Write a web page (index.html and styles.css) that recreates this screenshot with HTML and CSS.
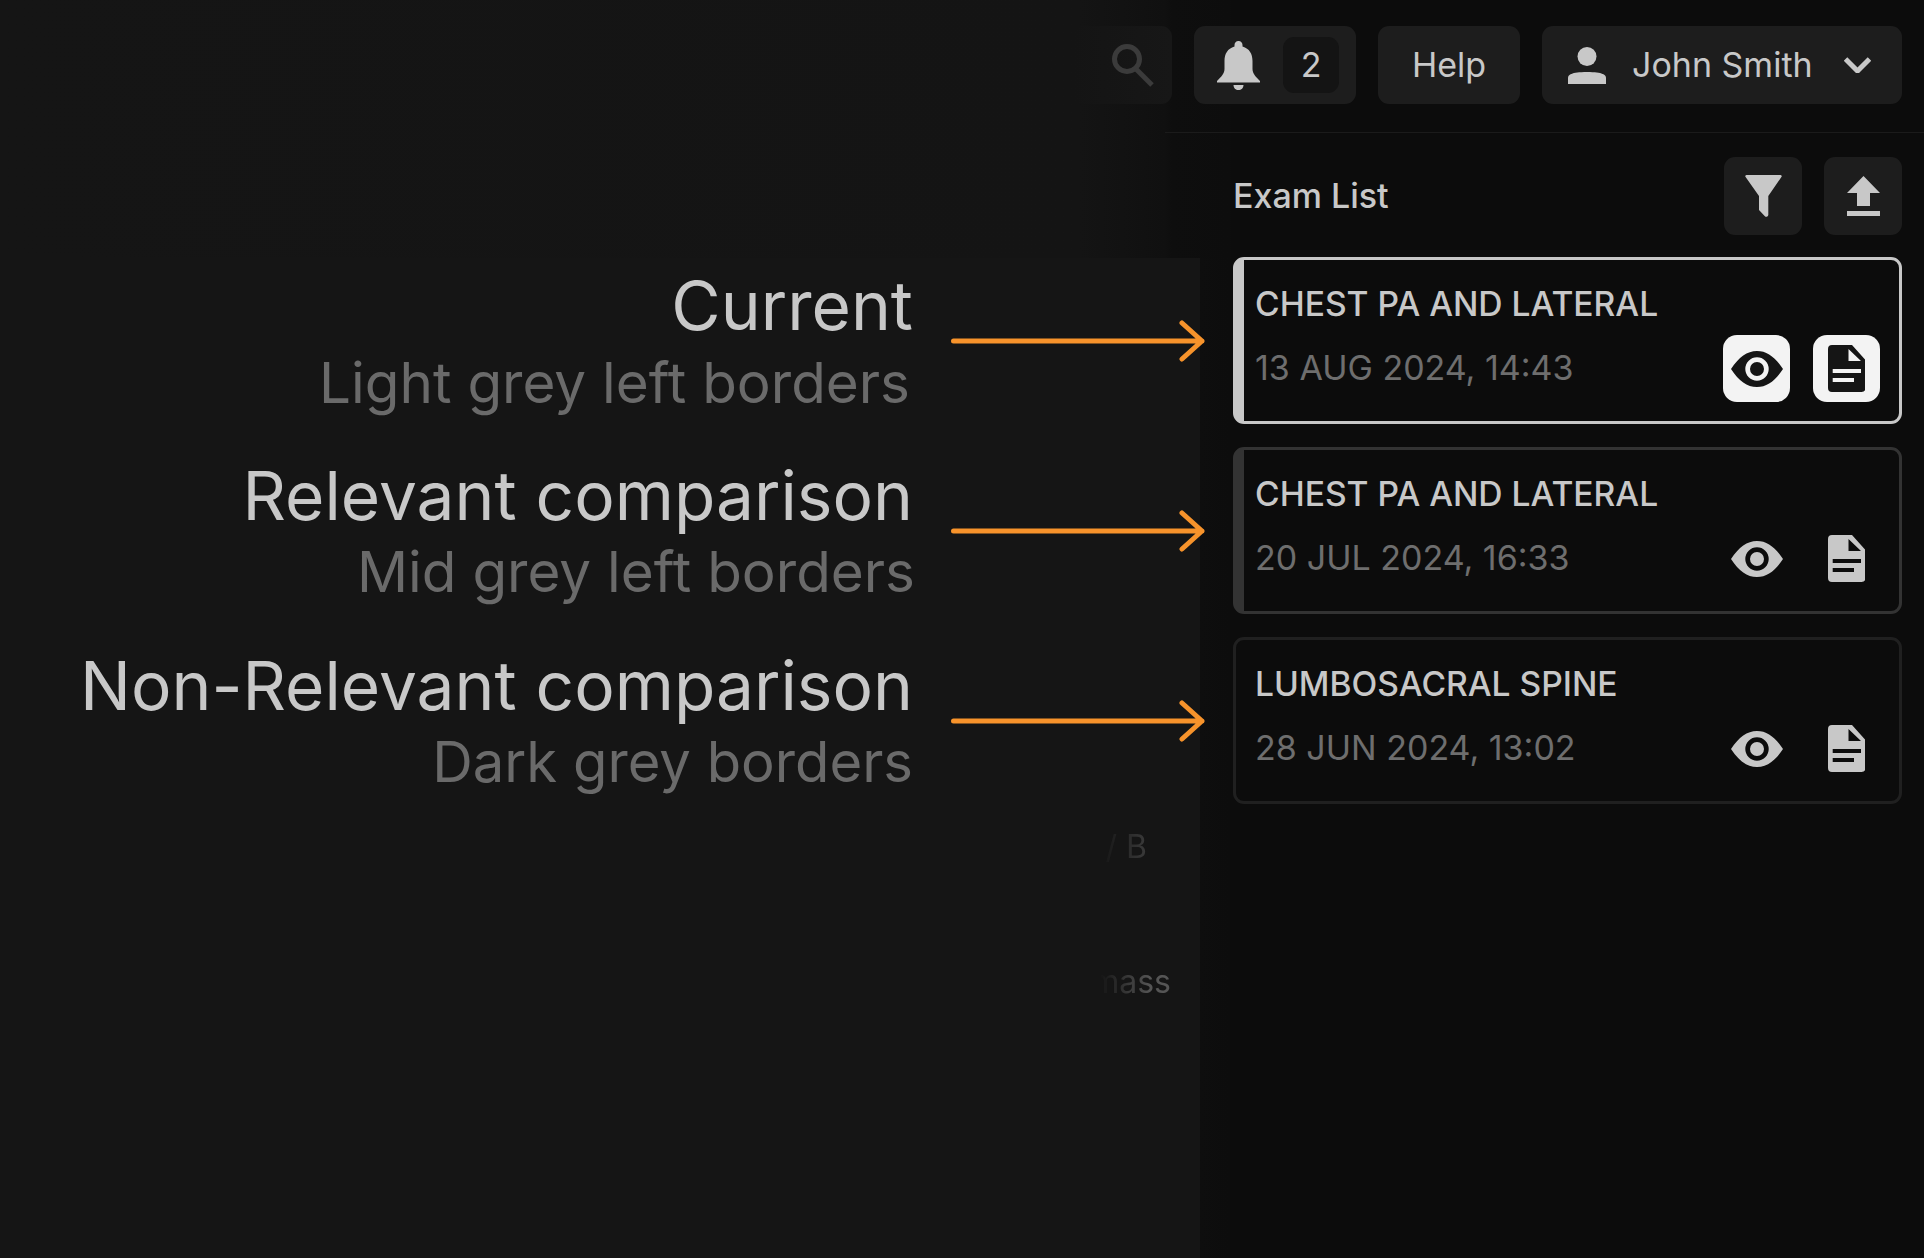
FILE: index.html
```html
<!DOCTYPE html>
<html lang="en">
<head>
<meta charset="utf-8">
<title>Exam List</title>
<link rel="stylesheet" href="styles.css">
</head>
<body>
<svg class="defs" width="0" height="0" aria-hidden="true">
  <symbol id="i-eye" viewBox="0 0 52 36"><path fill-rule="evenodd" d="M0 18C8 6 16 0 26 0s18 6 26 18C44 30 36 36 26 36S8 30 0 18zM26 6.300a11.700 11.700 0 1 0 0 23.400a11.700 11.700 0 1 0 0-23.400zM26 11a7 7 0 1 1 0 14a7 7 0 1 1 0-14z"/></symbol>
  <symbol id="i-doc" viewBox="0 0 37.500 47"><path fill-rule="evenodd" d="M4 0H24L37.500 15V43a4 4 0 0 1-4 4H4a4 4 0 0 1-4-4V4a4 4 0 0 1 4-4zM20.500 4V16H33zM4.700 24V28H33V24zM4.700 33V37H26V33z"/></symbol>
  <symbol id="i-arrow" viewBox="0 0 256 42"><path d="M2.500 21H251M231 3L251 21L231 39" fill="none" stroke="#f7932b" stroke-width="5" stroke-linecap="round" stroke-linejoin="round"/></symbol>
</svg>
<div class="page">
  <header class="topbar">
    <div class="tool tool-search">
      <svg class="ic-search" viewBox="0 0 42 44"><circle cx="15" cy="16" r="12.500" fill="none" stroke="currentColor" stroke-width="5"/><path d="M24 26L40 42" fill="none" stroke="currentColor" stroke-width="5"/></svg>
    </div>
    <div class="tool tool-bell">
      <svg class="ic-bell" viewBox="0 0 43 49"><path d="M21.500 0c-2.500 0-4 1.800-4 4v1.500C10.500 7.500 7.500 13 7.500 20v8c0 4.500-3.500 8-7.500 12v1.500h43V40c-4-4-7.500-7.500-7.500-12v-8c0-7-3-12.500-10-14.500V4c0-2.200-1.500-4-4-4zM16.500 44h10c0 3-2.200 5-5 5s-5-2-5-5z"/></svg>
      <span class="badge">2</span>
    </div>
    <div class="tool tool-help"><span class="tool-label">Help</span></div>
    <div class="tool tool-user">
      <svg class="ic-user" viewBox="0 0 38 37"><circle cx="19" cy="9.500" r="9.500"/><path d="M0 37V31C0 28 3 25 19 25s19 3 19 6v6z"/></svg>
      <span class="user-name tool-label">John Smith</span>
      <svg class="ic-chev" viewBox="0 0 27 16"><path d="M1.500 2L13.500 14L25.500 2" fill="none" stroke="currentColor" stroke-width="5"/></svg>
    </div>
  </header>
  <div class="body">
    <section class="notes">
      <div class="note">
        <div class="note-text"><p class="note-title">Current</p><p class="note-sub note-sub-light">Light grey left borders</p></div>
        <svg class="arrow"><use href="#i-arrow"/></svg>
      </div>
      <div class="note">
        <div class="note-text"><p class="note-title">Relevant comparison</p><p class="note-sub note-sub-mid">Mid grey left borders</p></div>
        <svg class="arrow"><use href="#i-arrow"/></svg>
      </div>
      <div class="note">
        <div class="note-text"><p class="note-title">Non-Relevant comparison</p><p class="note-sub note-sub-dark">Dark grey borders</p></div>
        <svg class="arrow"><use href="#i-arrow"/></svg>
      </div>
      <p class="ghost ghost-b">/ B</p>
      <p class="ghost ghost-mass">mass</p>
    </section>
    <aside class="side">
      <div class="side-head">
        <h2 class="side-title">Exam List</h2>
        <div class="side-tools">
          <div class="tool tool-square"><svg class="ic-filter" viewBox="0 0 37 42"><path d="M1.500 0H35.500a1.200 1.200 0 0 1 .9 2L23.300 21V40a2 2 0 0 1-3.400 1.200L14 35V21L.6 2a1.200 1.200 0 0 1 .9-2z"/></svg></div>
          <div class="tool tool-square"><svg class="ic-upload" viewBox="0 0 33 40"><path d="M16.500 0L33 17H23V30H10V17H0zM0 35H33V40H0z"/></svg></div>
        </div>
      </div>
      <article class="card card-current">
        <h3 class="card-title">CHEST PA AND LATERAL</h3>
        <div class="card-row">
          <span class="card-date">13 AUG 2024, 14:43</span>
          <div class="card-actions">
            <span class="action action-on"><svg class="ic-eye"><use href="#i-eye"/></svg></span>
            <span class="action action-on"><svg class="ic-doc"><use href="#i-doc"/></svg></span>
          </div>
        </div>
      </article>
      <article class="card card-relevant">
        <h3 class="card-title">CHEST PA AND LATERAL</h3>
        <div class="card-row">
          <span class="card-date">20 JUL 2024, 16:33</span>
          <div class="card-actions">
            <span class="action"><svg class="ic-eye"><use href="#i-eye"/></svg></span>
            <span class="action"><svg class="ic-doc"><use href="#i-doc"/></svg></span>
          </div>
        </div>
      </article>
      <article class="card card-other">
        <h3 class="card-title">LUMBOSACRAL SPINE</h3>
        <div class="card-row">
          <span class="card-date">28 JUN 2024, 13:02</span>
          <div class="card-actions">
            <span class="action"><svg class="ic-eye"><use href="#i-eye"/></svg></span>
            <span class="action"><svg class="ic-doc"><use href="#i-doc"/></svg></span>
          </div>
        </div>
      </article>
    </aside>
  </div>
</div>
</body>
</html>
```
FILE: styles.css
```css
* { box-sizing: border-box; }
html, body { margin: 0; padding: 0; background: #0c0c0c; }
body { font-family: Inter, "Liberation Sans", sans-serif; color: #c8c8c8; }
p, h2, h3 { margin: 0; }
.defs { position: absolute; }

.page {
  width: 1924px;
  height: 1258px;
  overflow: hidden;
  background-color: #0c0c0c;
  background-image:
    linear-gradient(#151515, #151515),
    linear-gradient(90deg, #0e0e0e, #0d0d0d),
    linear-gradient(90deg, #151515 0, #141414 1080px, #101010 1165px, #0e0e0e 1172px, #0d0d0d 1230px, #0c0c0c 1231px);
  background-repeat: no-repeat;
  background-size: 1200px 1000px, 30px 1000px, 100% 258px;
  background-position: 0 258px, 1200px 258px, 0 0;
}

/* top bar */
.topbar {
  height: 133px;
  margin-left: 1165px;
  padding: 26px 22px 0 0;
  display: flex;
  justify-content: flex-end;
  align-items: flex-start;
  gap: 22px;
  border-bottom: 1px solid #1b1b1b;
}
.tool {
  height: 78px;
  background: #1d1d1d;
  border-radius: 11px;
  display: flex;
  align-items: center;
  color: #c8c8c8;
  fill: currentColor;
  font-size: 34px;
  flex: none;
}
.tool-label { position: relative; top: -1px; }
.tool-search {
  width: 100px;
  margin-left: -93px;
  padding-left: 40px;
  background: linear-gradient(90deg, #141414, #171717);
  color: #3b3b3b;
}
.ic-search { width: 42px; height: 44px; }
.tool-bell { width: 162px; padding: 0 17px 0 23px; justify-content: space-between; }
.ic-bell { width: 43px; height: 49px; }
.badge {
  width: 56px;
  height: 56px;
  border-radius: 11px;
  background: #141414;
  padding-bottom: 2px;
  display: flex;
  align-items: center;
  justify-content: center;
}
.tool-help { width: 142px; justify-content: center; }
.tool-user { width: 360px; padding-left: 26px; }
.ic-user { width: 38px; height: 37px; margin-right: 26px; }
.user-name { width: 212px; }
.ic-chev { width: 27px; height: 16px; }

/* layout */
.body { display: flex; }
.notes { width: 1233px; flex: none; padding-top: 124px; }
.side { flex: 1; padding: 24px 22px 0 0; }

/* annotations */
.note {
  height: 167px;
  margin-bottom: 23px;
  padding-right: 26px;
  display: flex;
  justify-content: flex-end;
  gap: 38px;
}
.note-text { text-align: right; padding-top: 10px; }
.note-title { font-size: 67.600px; line-height: 78px; color: #c8c8c8; }
.note-sub { font-size: 56.600px; line-height: 78px; color: #6a6a6a; margin-top: -2px; }
.note-sub-light { margin-top: -1px; margin-right: 3px; }
.note-sub-mid { margin-right: -2px; }
.note-sub-dark { font-size: 56.200px; }
.arrow { width: 256px; height: 42px; margin-top: 63px; flex: none; }

.ghost {
  font-size: 32px;
  line-height: 40px;
  text-align: right;
  color: #4a4a4a;
  -webkit-mask-image: linear-gradient(90deg, transparent 1100px, #000 1150px);
  mask-image: linear-gradient(90deg, transparent 1100px, #000 1150px);
}
.ghost-b { margin-top: 13px; padding-right: 86px; color: #3d3d3d; }
.ghost-mass { margin-top: 95px; padding-right: 62px; color: #555; }

/* exam list */
.side-head {
  height: 78px;
  margin-bottom: 22px;
  display: flex;
  align-items: center;
  justify-content: space-between;
}
.side-title { font-size: 34px; font-weight: 500; position: relative; top: -1px; }
.side-tools { display: flex; gap: 22px; }
.tool-square { width: 78px; justify-content: center; }
.ic-filter { width: 37px; height: 42px; }
.ic-upload { width: 33px; height: 40px; }

.card {
  height: 167px;
  margin-bottom: 23px;
  padding: 24px 19px 19px 11px;
  border: 3px solid #202020;
  border-radius: 11px;
}
.card-current { border-color: #c8c8c8; border-left-width: 11px; }
.card-relevant { border-color: #333; border-left-width: 11px; }
.card-other { padding-left: 19px; }
.card-title { font-size: 33.600px; line-height: 40px; font-weight: 500; color: #c8c8c8; }
.card-row { margin-top: 11px; display: flex; align-items: center; justify-content: space-between; }
.card-date { font-size: 34px; color: #6e6e6e; padding-bottom: 2px; }
.card-actions { display: flex; gap: 23px; }
.action {
  width: 67px;
  height: 67px;
  border-radius: 14px;
  display: flex;
  align-items: center;
  justify-content: center;
  fill: #c8c8c8;
}
.action-on { background: #f3f3f3; fill: #151515; }
.ic-eye { width: 52px; height: 36px; }
.ic-doc { width: 37.500px; height: 47px; }
```
